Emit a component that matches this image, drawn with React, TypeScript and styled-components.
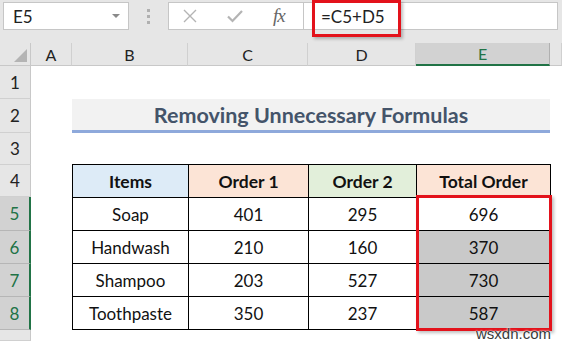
import React from 'react';
import styled, { createGlobalStyle } from 'styled-components';

const GlobalStyle = createGlobalStyle`
    html, body {
        margin: 0;
        padding: 0;
        background: #ffffff;
        overflow: hidden;
    }
    body {
        font-family: Lato, "Open Sans", sans-serif;
    }
`;

const Page = styled.div`
    width: 562px;
    height: 341px;
    position: relative;
    overflow: hidden;
    background: #ffffff;
`;

const Toolbar = styled.div`
    height: 43px;
    background: #e6e6e6;
    display: flex;
    align-items: flex-start;
    padding-top: 2px;
    box-sizing: border-box;
`;

const Box = styled.div<{ $w?: number; $grow?: boolean }>`
    height: 28px;
    box-sizing: border-box;
    background: #ffffff;
    border: 1px solid #c6c6c6;
    display: flex;
    align-items: center;
    ${p => p.$w ? `width: ${p.$w}px;` : ''}
    ${p => p.$grow ? 'flex: 1;' : ''}
`;

const NameBox = styled(Box)`
    margin-left: 3px;
    padding: 0 8px 0 9px;
    justify-content: space-between;
    font-size: 17px;
    color: #222;
`;

const Caret = styled.span`
    width: 0;
    height: 0;
    border-left: 4px solid transparent;
    border-right: 4px solid transparent;
    border-top: 4px solid #8a8a8a;
`;

const Dots = styled.div`
    width: 39px;
    height: 28px;
    display: flex;
    flex-direction: column;
    align-items: center;
    justify-content: center;
    gap: 3px;
    span {
        width: 3px;
        height: 3px;
        background: #b0b0b0;
    }
`;

const IconBox = styled(Box)`
    padding-left: 14px;
    gap: 30px;
`;

const Fx = styled.span`
    font-family: "Liberation Serif", serif;
    font-style: italic;
    font-size: 19px;
    color: #666;
    letter-spacing: -1px;
`;

const FormulaBox = styled(Box)`
    margin-right: 4px;
    border-left: none;
    position: relative;
    padding-left: 17px;
    font-size: 17px;
    color: #222;
`;

const Annot = styled.div`
    position: absolute;
    border: 3px solid #e3121b;
    box-shadow: 2px 2px 3px rgba(0, 0, 0, 0.25);
    pointer-events: none;
`;

const Sheet = styled.div`
    display: grid;
    grid-template-columns: 31px 41px 116px 120px 108px 134px 1fr;
    grid-template-rows: 23px 33px 34px 32px 32px 34px 33px 33px 33px 1fr;
    height: 298px;
    position: relative;
`;

const Corner = styled.div`
    background: #e6e6e6;
    border-right: 1px solid #c8c8c8;
    border-bottom: 1px solid #c8c8c8;
    position: relative;
    &::after {
        content: '';
        position: absolute;
        right: 3px;
        bottom: 3px;
        border-left: 13px solid transparent;
        border-bottom: 13px solid #b4b4b4;
    }
`;

const ColHead = styled.div<{ $sel?: boolean }>`
    background: ${p => p.$sel ? '#d2d2d2' : '#e6e6e6'};
    color: ${p => p.$sel ? '#217346' : '#222'};
    border-right: 1px solid ${p => p.$sel ? '#b0b0b0' : '#d0d0d0'};
    border-bottom: ${p => p.$sel ? '2px solid #217346' : '1px solid #c8c8c8'};
    display: flex;
    align-items: center;
    justify-content: center;
    font-size: 16px;
    box-sizing: border-box;
`;

const RowHead = styled.div<{ $sel?: boolean }>`
    grid-column: 1;
    background: ${p => p.$sel ? '#d2d2d2' : '#e6e6e6'};
    color: ${p => p.$sel ? '#217346' : '#222'};
    border-bottom: 1px solid ${p => p.$sel ? '#b6b6b6' : '#d0d0d0'};
    border-right: ${p => p.$sel ? '2px solid #217346' : '1px solid #c8c8c8'};
    display: flex;
    align-items: center;
    justify-content: center;
    font-size: 17px;
    box-sizing: border-box;
`;

const Title = styled.div`
    grid-column: 3 / 7;
    grid-row: 3;
    background: #f2f2f2;
    border-bottom: 3px solid #8ea9db;
    display: flex;
    align-items: center;
    justify-content: center;
    font-weight: 700;
    font-size: 21.5px;
    color: #44546a;
    box-sizing: border-box;
    padding-top: 1px;
`;

const Table = styled.div`
    grid-column: 3 / 7;
    grid-row: 5 / 10;
    display: grid;
    grid-template-columns: 115px 119px 107px 133px;
    grid-template-rows: repeat(5, 1fr);
    gap: 1px;
    padding: 1px;
    background: #000;
    width: 479px;
    height: 166px;
    box-sizing: border-box;
    position: relative;
    margin-top: -1px;
`;

const Cell = styled.div<{ $bg?: string; $bold?: boolean }>`
    background: ${p => p.$bg ?? '#ffffff'};
    font-weight: ${p => p.$bold ? 700 : 400};
    font-size: ${p => p.$bold ? 17.5 : 17}px;
    color: #111;
    display: flex;
    align-items: center;
    justify-content: center;
`;

const Watermark = styled.div`
    position: absolute;
    right: 11px;
    bottom: 0;
    line-height: 15px;
    font-family: "Liberation Sans Narrow", "Liberation Sans", sans-serif;
    font-size: 15px;
    color: #3a3a3a;
    text-shadow: 0 0 2px #fff, 0 0 2px #fff;
`;

const headers = [
    { label: 'Items', bg: '#ddebf7' },
    { label: 'Order 1', bg: '#fce4d6' },
    { label: 'Order 2', bg: '#e2efda' },
    { label: 'Total Order', bg: '#fce4d6' },
];

const rows: [string, number, number, number][] = [
    ['Soap', 401, 295, 696],
    ['Handwash', 210, 160, 370],
    ['Shampoo', 203, 527, 730],
    ['Toothpaste', 350, 237, 587],
];

const XIcon = () => (
    <svg width="14" height="14" viewBox="0 0 14 14">
        <path d="M1 1 L13 13 M13 1 L1 13" stroke="#b4b4b4" strokeWidth="1.4" fill="none" />
    </svg>
);

const CheckIcon = () => (
    <svg width="16" height="14" viewBox="0 0 16 14">
        <path d="M1 7.5 L5.5 12 L15 2" stroke="#b4b4b4" strokeWidth="2.2" fill="none" />
    </svg>
);

const App: React.FC = () => {
    const rowHeads = [1, 2, 3, 4, 5, 6, 7, 8];
    return (
        <Page>
            <GlobalStyle />
            <Toolbar>
                <NameBox $w={126}>
                    E5
                    <Caret />
                </NameBox>
                <Dots><span /><span /><span /></Dots>
                <IconBox $w={136}>
                    <XIcon />
                    <CheckIcon />
                    <Fx>fx</Fx>
                </IconBox>
                <FormulaBox $grow>
                    =C5+D5
                    <Annot style={{ left: 8, top: -3, width: 83, height: 31 }} />
                </FormulaBox>
            </Toolbar>
            <Sheet>
                <Corner />
                {['A', 'B', 'C', 'D', 'E'].map(c => (
                    <ColHead key={c} $sel={c === 'E'}>{c}</ColHead>
                ))}
                <ColHead />
                {rowHeads.map(n => (
                    <RowHead key={n} $sel={n >= 5} style={{ gridRow: n + 1 }}>{n}</RowHead>
                ))}
                <RowHead style={{ gridRow: 10 }} />
                <Title>Removing Unnecessary Formulas</Title>
                <Table>
                    {headers.map(h => (
                        <Cell key={h.label} $bg={h.bg} $bold>{h.label}</Cell>
                    ))}
                    {rows.map((r, i) => (
                        <React.Fragment key={r[0]}>
                            <Cell>{r[0]}</Cell>
                            <Cell>{r[1]}</Cell>
                            <Cell>{r[2]}</Cell>
                            <Cell $bg={i === 0 ? '#ffffff' : '#c9c9c9'}>{r[3]}</Cell>
                        </React.Fragment>
                    ))}
                    <Annot style={{ left: 344, top: 31, width: 136, height: 136, boxSizing: 'border-box' }} />
                </Table>
                <Watermark>wsxdn.com</Watermark>
            </Sheet>
        </Page>
    );
};

export default App;
